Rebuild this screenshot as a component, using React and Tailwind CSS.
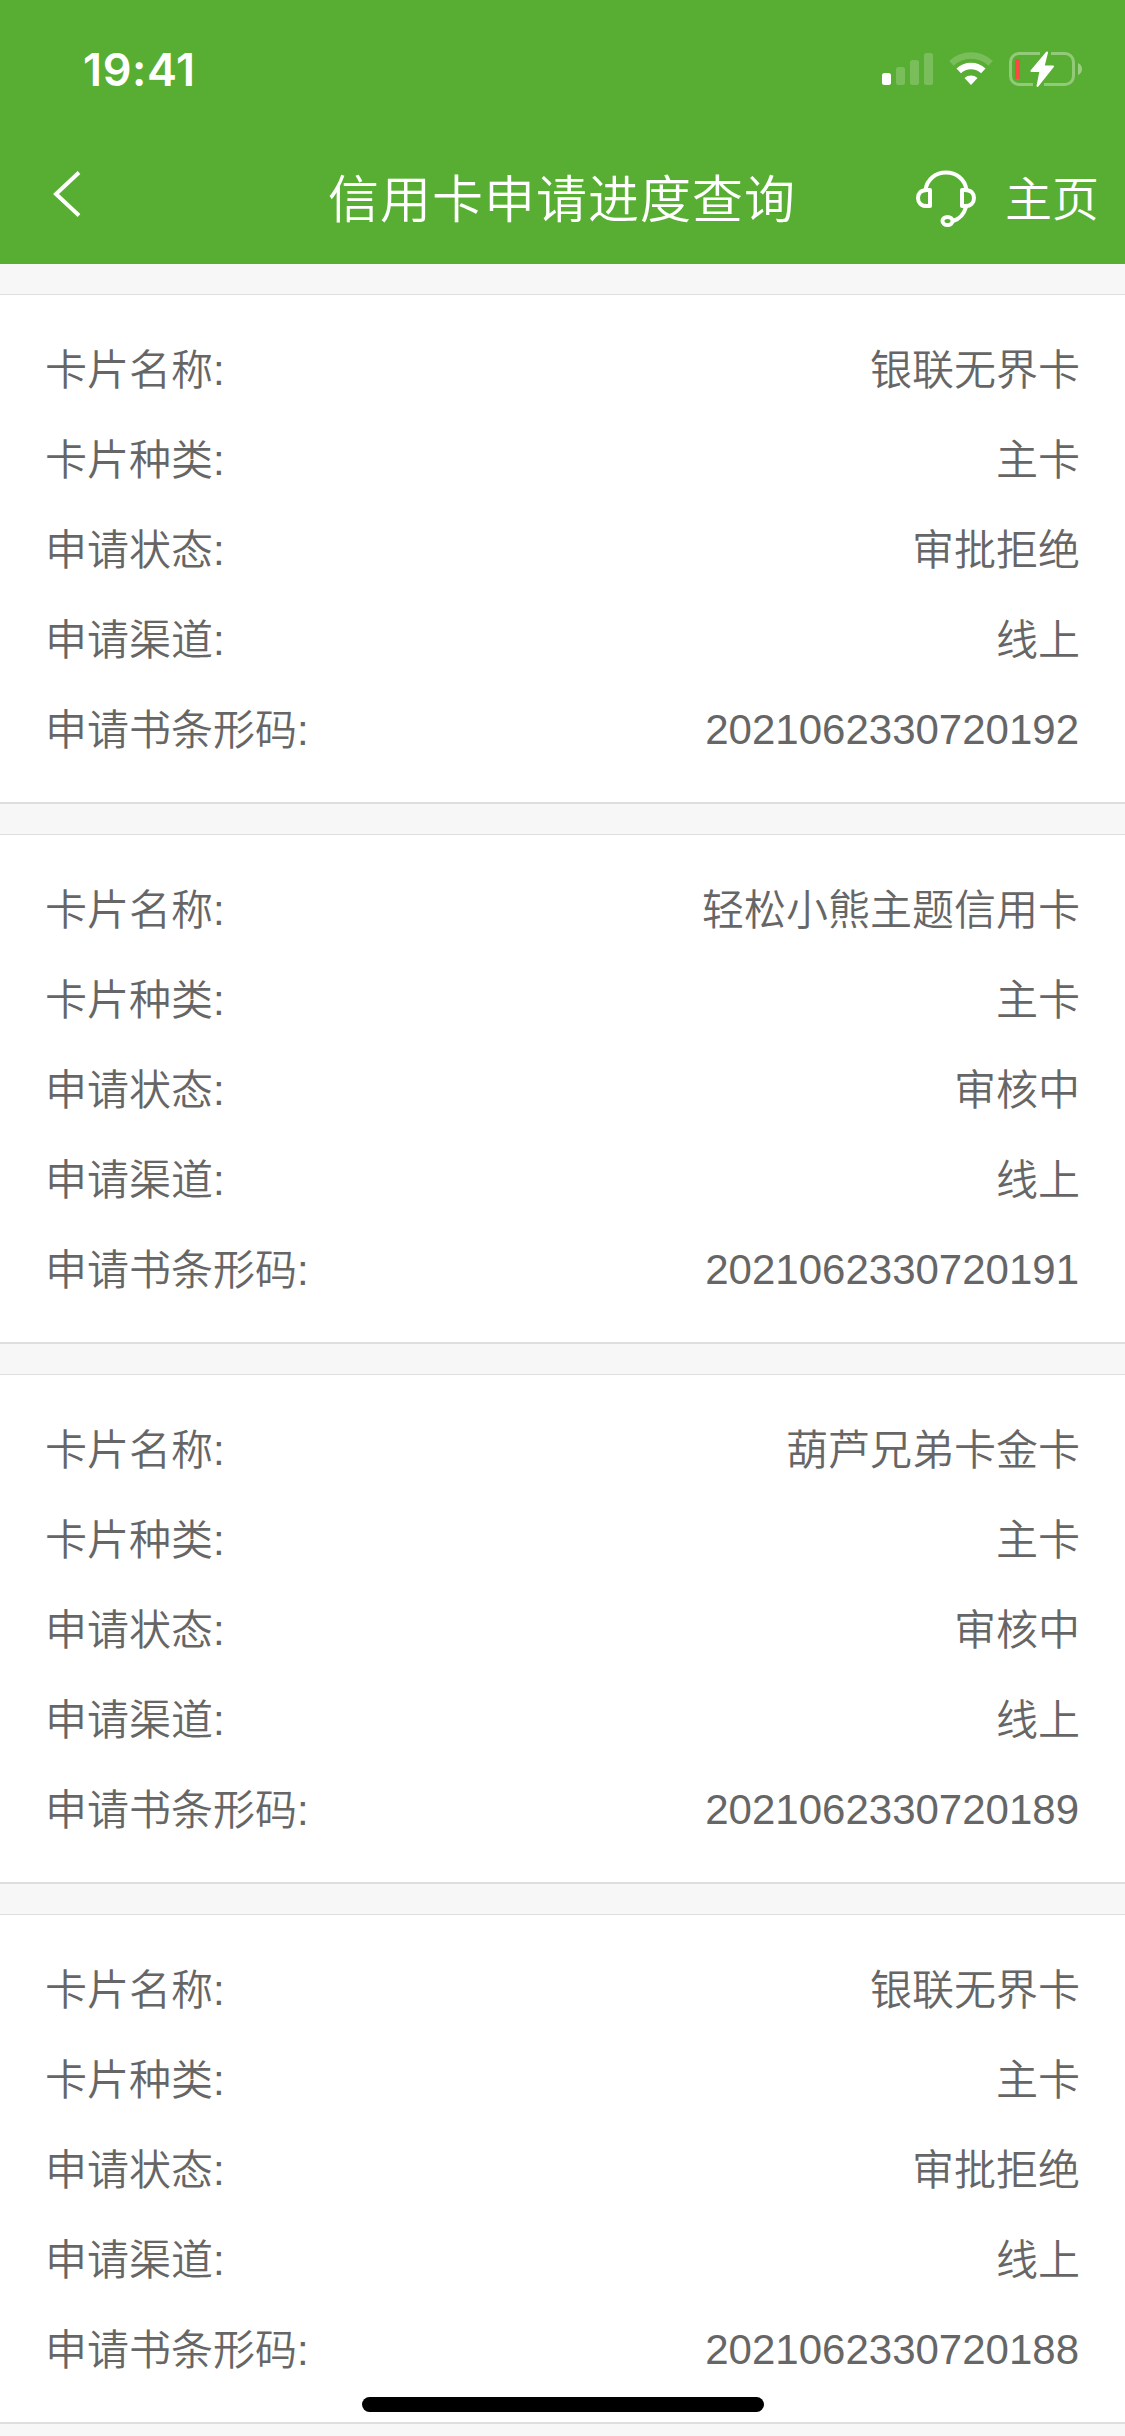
import React from "react";

const applications = [
  { id: "2021062330720192", name: "银联无界卡", type: "主卡", status: "审批拒绝", channel: "线上" },
  { id: "2021062330720191", name: "轻松小熊主题信用卡", type: "主卡", status: "审核中", channel: "线上" },
  { id: "2021062330720189", name: "葫芦兄弟卡金卡", type: "主卡", status: "审核中", channel: "线上" },
  { id: "2021062330720188", name: "银联无界卡", type: "主卡", status: "审批拒绝", channel: "线上" },
];

function SignalIcon() {
  return (
    <svg width="51" height="32" viewBox="0 0 51 32" fill="#fff">
      <rect x="0" y="20" width="9" height="12" rx="2.5" />
      <g opacity="0.2">
        <rect x="14" y="14" width="9" height="18" rx="2.5" />
        <rect x="28" y="7" width="9" height="25" rx="2.5" />
        <rect x="42" y="0" width="9" height="32" rx="2.5" />
      </g>
    </svg>
  );
}

function WifiIcon() {
  return (
    <svg width="46" height="34" viewBox="0 0 46 34" fill="none" stroke="#fff">
      <path d="M3.4 11.3 A28.5 28.5 0 0 1 42.6 11.3" strokeWidth="6.5" opacity="0.2" />
      <path d="M10.7 18.8 A18 18 0 0 1 35.3 18.8" strokeWidth="6.5" />
      <path d="M16.5 26 A10 10 0 0 1 29.5 26 L23 33 Z" fill="#fff" stroke="none" />
    </svg>
  );
}

function BatteryIcon() {
  return (
    <svg width="74" height="36" viewBox="0 0 74 36" fill="none">
      <path
        d="M31 2.5 H10 A8.5 8.5 0 0 0 1.5 11 V25 A8.5 8.5 0 0 0 10 33.5 H24 M42 2.5 H56 A8.5 8.5 0 0 1 64.5 11 V25 A8.5 8.5 0 0 1 56 33.5 H35"
        stroke="#fff"
        strokeWidth="3"
        opacity="0.35"
      />
      <path d="M69 12 Q73 14 73 18 Q73 22 69 24 Z" fill="#fff" opacity="0.4" />
      <rect x="6" y="8" width="5" height="20" rx="1.5" fill="#fb4a42" />
      <path
        d="M38 1.5 L22.5 20 H31.5 L28.5 35 L44 15.5 H34.5 Z"
        fill="#fff"
        stroke="#fff"
        strokeWidth="2"
        strokeLinejoin="round"
      />
    </svg>
  );
}

function HeadsetIcon() {
  return (
    <svg width="62" height="60" viewBox="0 0 62 60" fill="none" stroke="#fff" strokeWidth="4">
      <path d="M10.5 21 C12 10 21 3.5 31 3.5 C41 3.5 50 10 51.5 21" />
      <path d="M15 21 V37 H12 C6 37 3 33.5 3 29 C3 24.5 6 21 12 21 Z" strokeLinejoin="round" />
      <path d="M47 21 V37 H50 C56 37 59 33.5 59 29 C59 24.5 56 21 50 21 Z" strokeLinejoin="round" />
      <path d="M51 38 C49 45 45 50 38 52" />
      <ellipse cx="32.5" cy="52" rx="5" ry="4" />
    </svg>
  );
}

function Header() {
  return (
    <header className="h-[264px] bg-[#58ae32] text-white">
      <div className="flex h-[138px] items-center justify-between pl-[83px] pr-[42px]">
        <span className="font-['Inter',sans-serif] text-[45px] leading-none font-semibold tracking-[0.6px]">19:41</span>
        <div className="flex items-center gap-[15px]">
          <SignalIcon />
          <WifiIcon />
          <BatteryIcon />
        </div>
      </div>
      <div className="grid h-[126px] grid-cols-[328px_1fr_auto] items-center pr-[26px] pb-1">
        <svg className="mb-[10px] ml-[53px]" width="28" height="46" viewBox="0 0 28 46" fill="none" stroke="#fff" strokeWidth="4">
          <path d="M26 1.5 L3 23 L26 44.5" />
        </svg>
        <h1 className="mt-0.5 text-[51px] leading-none font-[350] tracking-[1px]">信用卡申请进度查询</h1>
        <div className="flex items-center gap-7">
          <HeadsetIcon />
          <span className="text-[47px] leading-none font-[350]">主页</span>
        </div>
      </div>
    </header>
  );
}

function Row({ label, value }) {
  return (
    <div className="flex h-[90px] items-center justify-between">
      <span>{label}:</span>
      <span>{value}</span>
    </div>
  );
}

function App() {
  return (
    <div className="relative h-[2436px] w-[1125px] overflow-hidden bg-[#f7f7f7] font-['Liberation_Sans','Noto_Sans_CJK_SC',sans-serif]">
      <Header />
      <main className="flex flex-col gap-[30px] pt-[30px]">
        {applications.map((item) => (
          <section
            key={item.id}
            className="border-t border-b-2 border-[#dedede] bg-white px-[45px] pt-[31px] pb-[26px] text-[42px] leading-none font-[350] text-[#666]"
          >
            <Row label="卡片名称" value={item.name} />
            <Row label="卡片种类" value={item.type} />
            <Row label="申请状态" value={item.status} />
            <Row label="申请渠道" value={item.channel} />
            <Row label="申请书条形码" value={<span className="mr-px mb-0.5 block">{item.id}</span>} />
          </section>
        ))}
      </main>
      {/* home indicator */}
      <div className="absolute bottom-6 left-[362px] h-[15px] w-[402px] rounded-full bg-black" />
    </div>
  );
}

export default App;
